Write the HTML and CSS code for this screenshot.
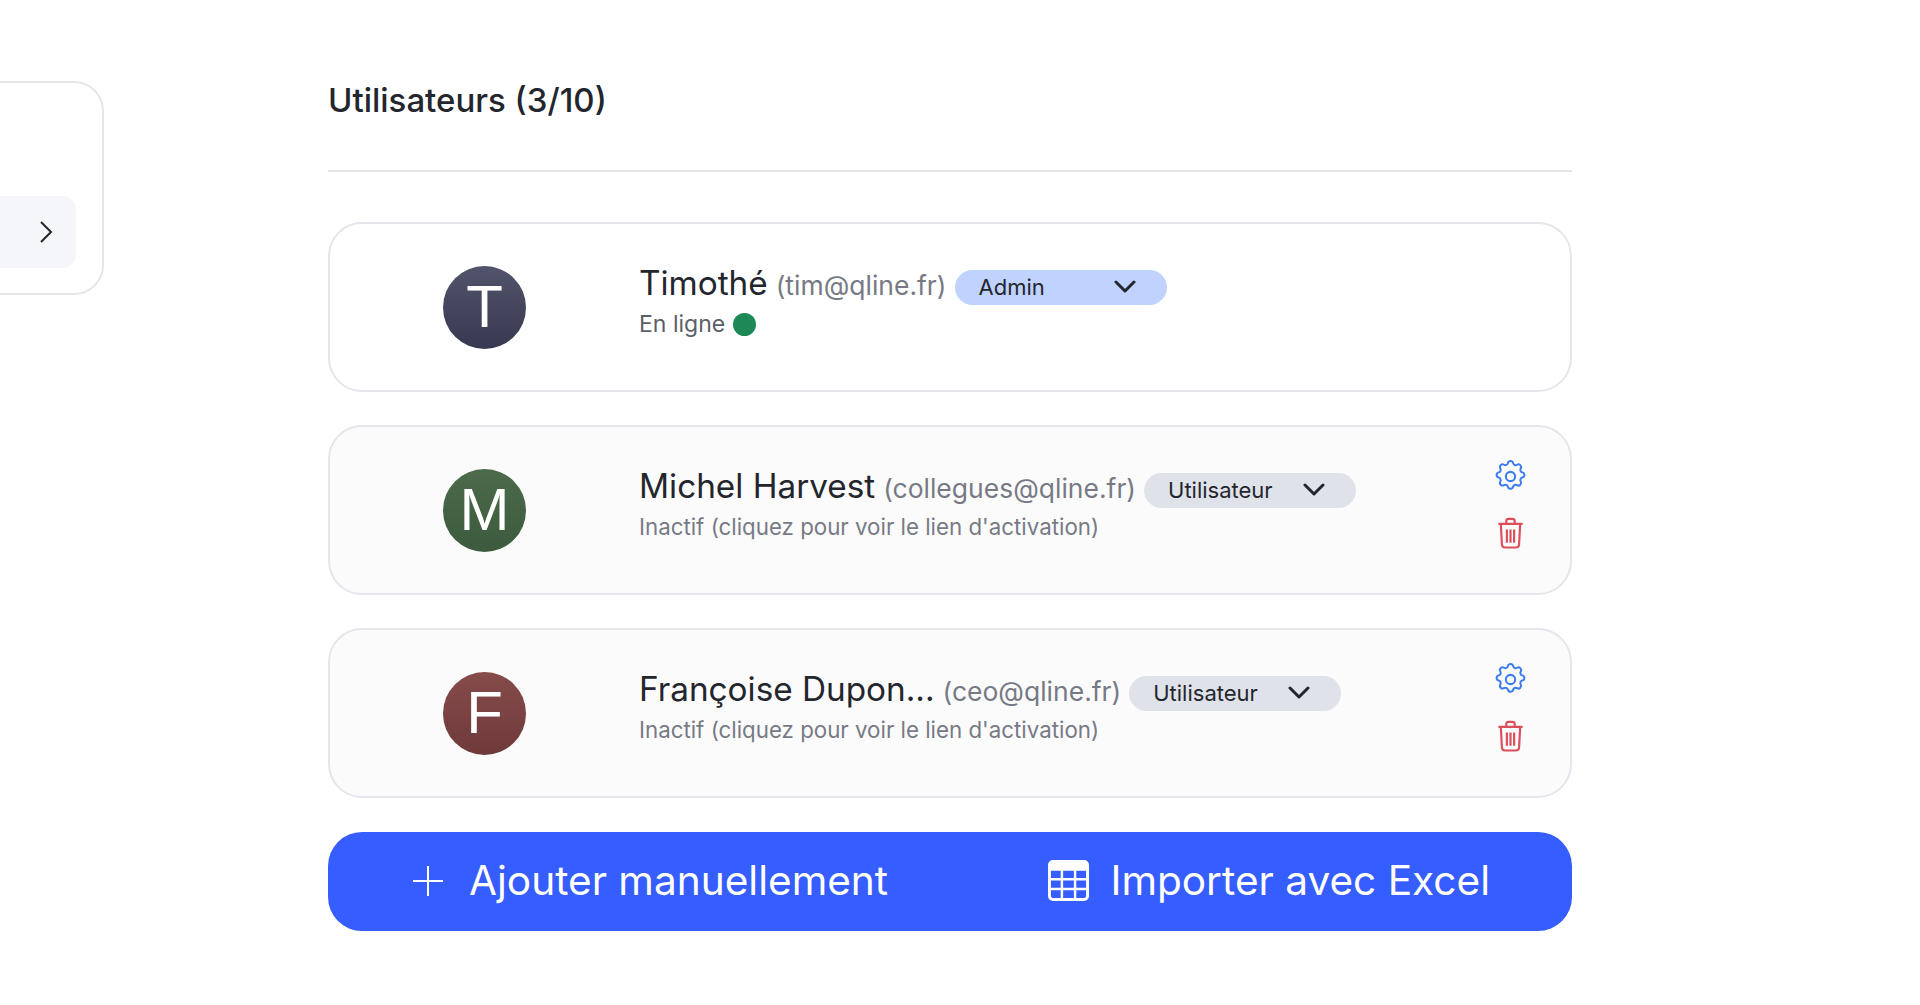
FILE: index.html
```html
<!DOCTYPE html>
<html lang="fr">
<head>
  <meta charset="UTF-8" />
  <title>Utilisateurs</title>
  <link rel="stylesheet" href="styles.css">
</head>
<body>
  <div class="page">
    <aside class="side">
      <div class="side-item">
        <svg class="chevron-right" viewBox="0 0 14 24" width="14" height="24"><path d="M2 2l10 10L2 22" /></svg>
      </div>
    </aside>

    <main class="content">
      <h1 class="title">Utilisateurs (3/10)</h1>
      <hr class="divider" />

      <div class="user-card">
        <div class="avatar avatar-t">T</div>
        <div class="user-info">
          <div class="user-line">
            <span class="user-name">Timothé</span>
            <span class="user-mail">(tim@qline.fr)</span>
            <div class="role role-admin">
              <span>Admin</span>
              <svg class="chevron" viewBox="0 0 22 14" width="22" height="14"><path d="M2 2l9 9 9-9" /></svg>
            </div>
          </div>
          <div class="user-status status-online">En ligne <span class="dot"></span></div>
        </div>
      </div>

      <div class="user-card inactive">
        <div class="avatar avatar-m">M</div>
        <div class="user-info">
          <div class="user-line">
            <span class="user-name">Michel Harvest</span>
            <span class="user-mail">(collegues@qline.fr)</span>
            <div class="role">
              <span>Utilisateur</span>
              <svg class="chevron" viewBox="0 0 22 14" width="22" height="14"><path d="M2 2l9 9 9-9" /></svg>
            </div>
          </div>
          <div class="user-status">Inactif (cliquez pour voir le lien d'activation)</div>
        </div>
        <div class="user-actions">
          <svg class="icon-gear" viewBox="0 0 24 24" width="37" height="37"><path d="M10.33 3.32c.43-1.76 2.93-1.76 3.35 0a1.72 1.72 0 0 0 2.57 1.07c1.54-.94 3.31.83 2.37 2.37a1.72 1.72 0 0 0 1.06 2.56c1.76.43 1.76 2.93 0 3.35a1.72 1.72 0 0 0-1.07 2.57c.94 1.54-.83 3.31-2.37 2.37a1.72 1.72 0 0 0-2.56 1.06c-.43 1.76-2.93 1.76-3.35 0a1.72 1.72 0 0 0-2.57-1.07c-1.54.94-3.31-.83-2.37-2.37a1.72 1.72 0 0 0-1.06-2.56c-1.76-.43-1.76-2.93 0-3.35a1.72 1.72 0 0 0 1.07-2.57c-.94-1.54.83-3.31 2.37-2.37 1 .6 2.29.07 2.56-1.06z" /><circle cx="12" cy="12" r="3" /></svg>
          <svg class="icon-trash" viewBox="0 0 24 28" width="29" height="34"><path d="M2 6.500h20M8.500 6V4.200C8.500 3 9.300 2.300 10.500 2.300h3c1.200 0 2 .7 2 1.900V6M4 7l.9 16.500c.1 1.500 1.100 2.500 2.600 2.500h9c1.500 0 2.500-1 2.600-2.500L20 7M9 11v11M12 11v11M15 11v11" /></svg>
        </div>
      </div>

      <div class="user-card inactive">
        <div class="avatar avatar-f">F</div>
        <div class="user-info">
          <div class="user-line">
            <span class="user-name">Françoise Dupon...</span>
            <span class="user-mail">(ceo@qline.fr)</span>
            <div class="role">
              <span>Utilisateur</span>
              <svg class="chevron" viewBox="0 0 22 14" width="22" height="14"><path d="M2 2l9 9 9-9" /></svg>
            </div>
          </div>
          <div class="user-status">Inactif (cliquez pour voir le lien d'activation)</div>
        </div>
        <div class="user-actions">
          <svg class="icon-gear" viewBox="0 0 24 24" width="37" height="37"><path d="M10.33 3.32c.43-1.76 2.93-1.76 3.35 0a1.72 1.72 0 0 0 2.57 1.07c1.54-.94 3.31.83 2.37 2.37a1.72 1.72 0 0 0 1.06 2.56c1.76.43 1.76 2.93 0 3.35a1.72 1.72 0 0 0-1.07 2.57c.94 1.54-.83 3.31-2.37 2.37a1.72 1.72 0 0 0-2.56 1.06c-.43 1.76-2.93 1.76-3.35 0a1.72 1.72 0 0 0-2.57-1.07c-1.54.94-3.31-.83-2.37-2.37a1.72 1.72 0 0 0-1.06-2.56c-1.76-.43-1.76-2.93 0-3.35a1.72 1.72 0 0 0 1.07-2.57c-.94-1.54.83-3.31 2.37-2.37 1 .6 2.29.07 2.56-1.06z" /><circle cx="12" cy="12" r="3" /></svg>
          <svg class="icon-trash" viewBox="0 0 24 28" width="29" height="34"><path d="M2 6.500h20M8.500 6V4.200C8.500 3 9.300 2.300 10.500 2.300h3c1.200 0 2 .7 2 1.900V6M4 7l.9 16.500c.1 1.500 1.100 2.500 2.600 2.500h9c1.500 0 2.500-1 2.600-2.500L20 7M9 11v11M12 11v11M15 11v11" /></svg>
        </div>
      </div>

      <div class="add-bar">
        <div class="add-item">
          <svg class="icon-plus" viewBox="0 0 32 32" width="32" height="32"><path d="M16 1v30M1 16h30" /></svg>
          <span>Ajouter manuellement</span>
        </div>
        <div class="add-item add-item-excel">
          <svg viewBox="0 0 42 42" width="41" height="41">
            <path class="icon-table" fill-rule="evenodd" d="M5 0h32a5 5 0 0 1 5 5v32a5 5 0 0 1-5 5H5a5 5 0 0 1-5-5V5a5 5 0 0 1 5-5zM3 11v7.500h10V11zm12.500 0v7.500h11V11zm13.500 0v7.500h10V11zM3 21v7.500h10V21zm12.500 0v7.500h11V21zm13.500 0v7.500h10V21zM3 31v6c0 1 1 2 2 2h8v-8zm12.500 0v8h11v-8zm13.500 0v8h8c1 0 2-1 2-2v-6z" />
          </svg>
          <span>Importer avec Excel</span>
        </div>
      </div>
    </main>
  </div>
</body>
</html>
```

FILE: styles.css
```css
* {
  box-sizing: border-box;
}
body {
  margin: 0;
  background: #fff;
  font-family: Inter, "Liberation Sans", sans-serif;
  color: #24262e;
  overflow: hidden;
}
.page {
  display: flex;
  align-items: flex-start;
  height: 1005px;
  margin-left: -40px;
}
.side {
  width: 144px;
  height: 214px;
  margin-top: 81px;
  padding: 113px 26px 0 0;
  border: 2px solid #e5e6eb;
  border-radius: 30px;
  flex-shrink: 0;
}
.side-item {
  height: 72px;
  background: #f5f6f9;
  border-radius: 14px;
  display: flex;
  align-items: center;
  justify-content: flex-end;
  padding-right: 23px;
}
.chevron-right path {
  fill: none;
  stroke: #24262e;
  stroke-width: 2;
}
.content {
  width: 1244px;
  margin-left: 224px;
  padding-top: 76px;
}
.title {
  margin: 0;
  font-size: 33px;
  font-weight: 500;
  line-height: 48px;
}
.divider {
  margin: 46px 0 50px;
  border: none;
  border-top: 2px solid #e3e4e8;
}
.user-card {
  display: flex;
  align-items: center;
  height: 170px;
  margin-bottom: 33px;
  padding: 0 41px 0 113px;
  border: 2px solid #e5e6eb;
  border-radius: 34px;
  background: #fff;
}
.user-card.inactive {
  background: #fbfbfc;
}
.avatar {
  width: 83px;
  height: 83px;
  padding-bottom: 2px;
  border-radius: 50%;
  flex-shrink: 0;
  display: flex;
  align-items: center;
  justify-content: center;
  color: #fff;
  font-family: "Liberation Sans", sans-serif;
  font-size: 60px;
}
.avatar-t { background: linear-gradient(#52546b, #373851); }
.avatar-m { background: linear-gradient(#4c6b4b, #3c5a3d); }
.avatar-f { background: linear-gradient(#864b4b, #6f3a3a); }
.user-info {
  margin-left: 113px;
  padding-bottom: 12px;
  flex: 1;
}
.user-line {
  display: flex;
  align-items: center;
  gap: 8px;
  height: 44px;
}
.user-name {
  font-size: 33.300px;
  font-weight: 400;
}
.user-mail {
  margin-top: 3px;
  font-size: 26.500px;
  color: #777a84;
}
.role {
  width: 212px;
  height: 35px;
  margin-top: 8px;
  padding: 0 31px 0 24px;
  border-radius: 18px;
  background: #dfe2e9;
  display: flex;
  align-items: center;
  justify-content: space-between;
  font-size: 22px;
}
.role-admin {
  background: #bfd3fe;
}
.chevron path {
  fill: none;
  stroke: #24262e;
  stroke-width: 3;
  stroke-linecap: round;
  stroke-linejoin: round;
}
.user-status {
  display: flex;
  align-items: center;
  gap: 8px;
  margin-top: 2px;
  font-size: 22.300px;
  line-height: 34px;
  color: #777a84;
}
.status-online {
  font-size: 23px;
  color: #5b5e68;
}
.dot {
  width: 23px;
  height: 23px;
  border-radius: 50%;
  background: #1d8a55;
}
.user-actions {
  display: flex;
  flex-direction: column;
  align-items: center;
  gap: 21px;
  margin-bottom: 12px;
}
.icon-gear, .icon-trash {
  fill: none;
}
.icon-gear {
  stroke: #3b7cf0;
  stroke-width: 1.300;
}
.icon-trash {
  stroke: #dc4e5c;
  stroke-width: 1.800;
}
.add-bar {
  height: 99px;
  margin-top: 34px;
  padding: 0 82px 2px 84px;
  border-radius: 34px;
  background: #355dff;
  color: #fff;
  display: flex;
  align-items: center;
  justify-content: space-between;
  font-size: 40.600px;
}
.add-item {
  display: flex;
  align-items: center;
  gap: 25px;
}
.add-item-excel {
  gap: 21px;
}
.icon-plus path {
  fill: none;
  stroke: #fff;
  stroke-width: 2;
}
.icon-table {
  fill: #fff;
}
```
